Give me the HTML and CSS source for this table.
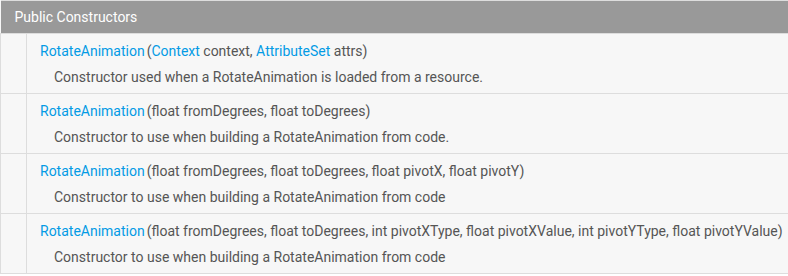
FILE: index.html
```html
<!DOCTYPE html>
<html lang="en">
<head>
  <meta charset="UTF-8">
  <title>RotateAnimation - Public Constructors</title>
  <link rel="stylesheet" href="styles.css">
</head>
<body>

  <table class="members">
    <tr>
      <th colspan="2">Public Constructors</th>
    </tr>
    <tr>
      <td class="spacer"></td>
      <td class="member">
        <div class="sig"><a href="#">RotateAnimation</a><span class="args">(<a href="#">Context</a> context, <a href="#">AttributeSet</a> attrs)</span></div>
        <div class="desc">Constructor used when a RotateAnimation is loaded from a resource.</div>
      </td>
    </tr>
    <tr>
      <td class="spacer"></td>
      <td class="member">
        <div class="sig"><a href="#">RotateAnimation</a><span class="args">(float fromDegrees, float toDegrees)</span></div>
        <div class="desc">Constructor to use when building a RotateAnimation from code.</div>
      </td>
    </tr>
    <tr>
      <td class="spacer"></td>
      <td class="member">
        <div class="sig"><a href="#">RotateAnimation</a><span class="args">(float fromDegrees, float toDegrees, float pivotX, float pivotY)</span></div>
        <div class="desc">Constructor to use when building a RotateAnimation from code</div>
      </td>
    </tr>
    <tr>
      <td class="spacer"></td>
      <td class="member">
        <div class="sig"><a href="#">RotateAnimation</a><span class="args">(float fromDegrees, float toDegrees, int pivotXType, float pivotXValue, int pivotYType, float pivotYValue)</span></div>
        <div class="desc">Constructor to use when building a RotateAnimation from code</div>
      </td>
    </tr>
  </table>

</body>
</html>
```

FILE: styles.css
```css
body {
  font-family: Roboto, 'Liberation Sans', sans-serif;
  margin: 0;
  background: #ffffff;
  color: #555;
}

.members {
  width: 100%;
  border-collapse: collapse;
  background: #f7f7f7;
  font-size: 14px;
}

.members th {
  background: #999;
  color: #fff;
  font-weight: normal;
  font-size: 14px;
  text-align: left;
  height: 32px;
  padding: 0 14px;
  border-top: 1px solid #ddd;
  border-bottom: 1px solid #ddd;
}

.members td {
  border-top: 1px solid #ddd;
  border-bottom: 1px solid #ddd;
  padding: 0;
  height: 59px;
  vertical-align: top;
}

.spacer {
  width: 25px;
  border-left: 1px solid #ddd;
  border-right: 1px solid #ddd;
}

.member {
  padding: 0 0 0 13px !important;
}

.sig {
  margin-top: 9px;
  line-height: 16px;
  white-space: nowrap;
}

.args {
  margin-left: 2px;
}

.desc {
  margin-top: 10px;
  padding-left: 14px;
  line-height: 16px;
}

a {
  color: #039be5;
  text-decoration: none;
}
```
